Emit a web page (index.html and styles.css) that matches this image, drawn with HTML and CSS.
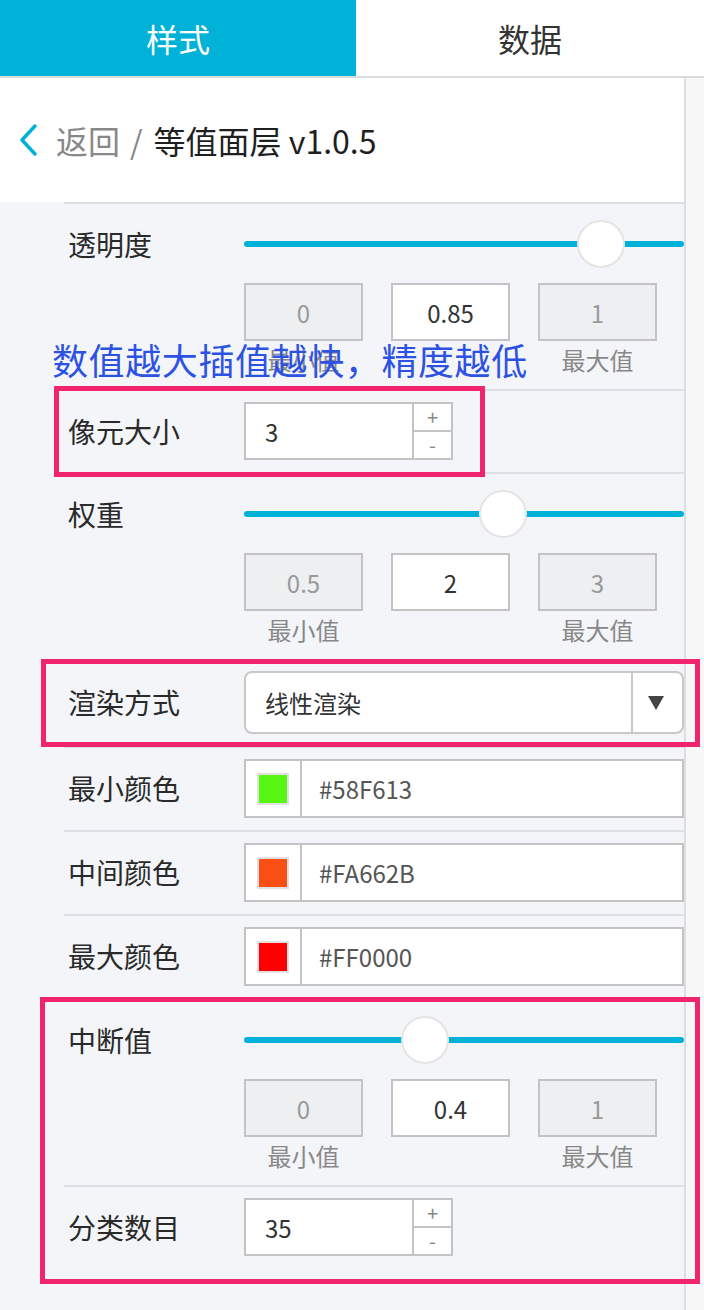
FILE: index.html
```html
<!DOCTYPE html>
<html lang="zh">
<head>
<meta charset="utf-8">
<title>等值面层</title>
<link rel="stylesheet" href="styles.css">
</head>
<body>
<div class="app">
  <div class="tabs">
    <div class="tab active">样式</div>
    <div class="tab">数据</div>
  </div>
  <div class="main">
    <div class="panel">
      <div class="header">
        <svg class="chev" viewBox="0 0 20 34" width="20" height="34"><polyline points="16,3 3,17 16,31" fill="none" stroke="#00b2d8" stroke-width="3.5" stroke-linecap="round" stroke-linejoin="round"/></svg>
        <span class="back">返回</span><span class="sep">/</span><span class="title">等值面层 v1.0.5</span>
      </div>
      <div class="rows">
        <div class="row slider-row">
          <div class="label">透明度</div>
          <div class="control">
            <div class="slider"><div class="track"></div><div class="thumb" style="left:333px"></div></div>
            <div class="range"><div class="nbox">0</div><div class="nbox val">0.85</div><div class="nbox">1</div></div>
            <div class="subs"><span>最小值</span><span></span><span>最大值</span></div>
          </div>
        </div>
        <div class="row input-row">
          <div class="label">像元大小</div>
          <div class="control">
            <div class="num"><div class="v">3</div><div class="spin"><span>+</span><span>-</span></div></div>
          </div>
        </div>
        <div class="row slider-row">
          <div class="label">权重</div>
          <div class="control">
            <div class="slider"><div class="track"></div><div class="thumb" style="left:235px"></div></div>
            <div class="range"><div class="nbox">0.5</div><div class="nbox val">2</div><div class="nbox">3</div></div>
            <div class="subs"><span>最小值</span><span></span><span>最大值</span></div>
          </div>
        </div>
        <div class="row select-row">
          <div class="label">渲染方式</div>
          <div class="control">
            <div class="select"><div class="v">线性渲染</div><div class="arrow"><i></i></div></div>
          </div>
        </div>
        <div class="row input-row">
          <div class="label">最小颜色</div>
          <div class="control">
            <div class="color"><div class="sw-cell"><div class="swatch" style="background:#58F613"></div></div><div class="hex">#58F613</div></div>
          </div>
        </div>
        <div class="row input-row">
          <div class="label">中间颜色</div>
          <div class="control">
            <div class="color"><div class="sw-cell"><div class="swatch" style="background:#FA4F14"></div></div><div class="hex">#FA662B</div></div>
          </div>
        </div>
        <div class="row input-row">
          <div class="label">最大颜色</div>
          <div class="control">
            <div class="color"><div class="sw-cell"><div class="swatch" style="background:#FF0000"></div></div><div class="hex">#FF0000</div></div>
          </div>
        </div>
        <div class="row slider-row">
          <div class="label">中断值</div>
          <div class="control">
            <div class="slider"><div class="track"></div><div class="thumb" style="left:157px"></div></div>
            <div class="range"><div class="nbox">0</div><div class="nbox val">0.4</div><div class="nbox">1</div></div>
            <div class="subs"><span>最小值</span><span></span><span>最大值</span></div>
          </div>
        </div>
        <div class="row input-row">
          <div class="label">分类数目</div>
          <div class="control">
            <div class="num"><div class="v">35</div><div class="spin"><span>+</span><span>-</span></div></div>
          </div>
        </div>
      </div>
    </div>
    <div class="scroll"></div>
  </div>

  <div class="note">数值越大插值越快，精度越低</div>
  <div class="mark mark-1"></div>
  <div class="mark mark-2"></div>
  <div class="mark mark-3"></div>
</div>
</body>
</html>
```

FILE: styles.css
```css
* { box-sizing: border-box; }

body {
  margin: 0;
  font-family: "Noto Sans CJK SC", "Noto Sans", sans-serif;
  background: #f3f5f8;
  color: #333;
}

.app {
  position: relative;
  width: 704px;
  min-height: 1310px;
  display: flex;
  flex-direction: column;
}

.tabs {
  display: flex;
  height: 78px;
  border-bottom: 2px solid #dcdcdc;
  background: #fff;
}

.tab {
  flex: 1;
  display: flex;
  align-items: center;
  justify-content: center;
  font-size: 32px;
  color: #333;
}

.tab.active {
  flex: 0 0 356px;
  background: #00b2d8;
  color: #fff;
}

.main {
  flex: 1;
  display: flex;
}

.panel {
  width: 686px;
  border-right: 2px solid #dedede;
  background: #f3f5f8;
}

.scroll {
  flex: 1;
  background: #f7f7f7;
}

.header {
  height: 124px;
  background: #fff;
  display: flex;
  align-items: center;
  padding-left: 19px;
  font-size: 32px;
}

.chev {
  margin-right: 17px;
  flex: none;
}

.back { color: #888; }

.sep {
  color: #888;
  margin: 0 11px 0 10px;
}

.title { color: #1f1f1f; }

.rows { margin-left: 64px; }

.row {
  display: grid;
  grid-template-columns: 176px 1fr;
  padding-left: 4px;
  border-top: 2px solid #dcdfe3;
}

.label {
  font-size: 28px;
  line-height: 58px;
  color: #2a2a2a;
}

.slider-row { padding: 16px 0 14px 4px; }
.slider-row .label { line-height: 48px; }

.input-row { padding: 11px 0 12px 4px; }
.select-row { padding: 10px 0 12px 4px; }
.select-row .label { line-height: 63px; }

.slider {
  position: relative;
  height: 48px;
}

.track {
  position: absolute;
  left: 0;
  right: 0;
  top: 21px;
  height: 6px;
  border-radius: 3px;
  background: #00b2d8;
}

.thumb {
  position: absolute;
  top: 0;
  width: 48px;
  height: 48px;
  border-radius: 50%;
  background: #fff;
  border: 2px solid #e4e4e4;
}

.range {
  display: flex;
  gap: 28px;
  margin-top: 15px;
}

.nbox {
  width: 119px;
  height: 58px;
  border: 2px solid #c3c3c3;
  background: #eeeff1;
  color: #999;
  font-size: 24px;
  display: flex;
  align-items: center;
  justify-content: center;
}

.nbox.val {
  background: #fff;
  color: #333;
}

.subs {
  display: flex;
  gap: 28px;
  margin-top: 4px;
}

.subs span {
  width: 119px;
  text-align: center;
  font-size: 24px;
  line-height: 30px;
  color: #888;
}

.num {
  display: flex;
  width: 209px;
  height: 58px;
  border: 2px solid #c3c3c3;
  background: #fff;
}

.num .v {
  flex: 1;
  padding-left: 19px;
  font-size: 24px;
  display: flex;
  align-items: center;
  color: #333;
}

.spin {
  width: 39px;
  border-left: 2px solid #c3c3c3;
  display: flex;
  flex-direction: column;
}

.spin span {
  flex: 1;
  display: flex;
  align-items: center;
  justify-content: center;
  color: #888;
  font-size: 20px;
  line-height: 1;
}

.spin span + span { border-top: 2px solid #c3c3c3; }

.select {
  height: 63px;
  border: 2px solid #c8c8c8;
  border-radius: 8px;
  background: #fff;
  display: flex;
}

.select .v {
  flex: 1;
  padding-left: 19px;
  font-size: 24px;
  display: flex;
  align-items: center;
  color: #333;
}

.arrow {
  width: 51px;
  border-left: 2px solid #c8c8c8;
  display: flex;
  align-items: center;
  justify-content: center;
  padding-right: 4px;
}

.arrow i {
  width: 0;
  height: 0;
  border-left: 8px solid transparent;
  border-right: 8px solid transparent;
  border-top: 14px solid #444;
}

.color {
  height: 59px;
  border: 2px solid #c3c3c3;
  background: #fff;
  display: flex;
}

.sw-cell {
  width: 56px;
  border-right: 2px solid #c3c3c3;
  display: flex;
  align-items: center;
  justify-content: center;
}

.swatch {
  width: 32px;
  height: 32px;
  border: 2px solid #e0e0e0;
}

.hex {
  padding-left: 17px;
  font-size: 24px;
  color: #555;
  display: flex;
  align-items: center;
}

.note {
  position: absolute;
  left: 52px;
  top: 335px;
  font-size: 36px;
  line-height: 48px;
  letter-spacing: 0.6px;
  color: #2d52e3;
  white-space: nowrap;
}

.mark {
  position: absolute;
  border: 5px solid #f0256d;
}

.mark-1 { left: 54px; top: 386px; width: 431px; height: 91px; }
.mark-2 { left: 41px; top: 659px; width: 659px; height: 88px; }
.mark-3 { left: 40px; top: 997px; width: 660px; height: 287px; }
```
